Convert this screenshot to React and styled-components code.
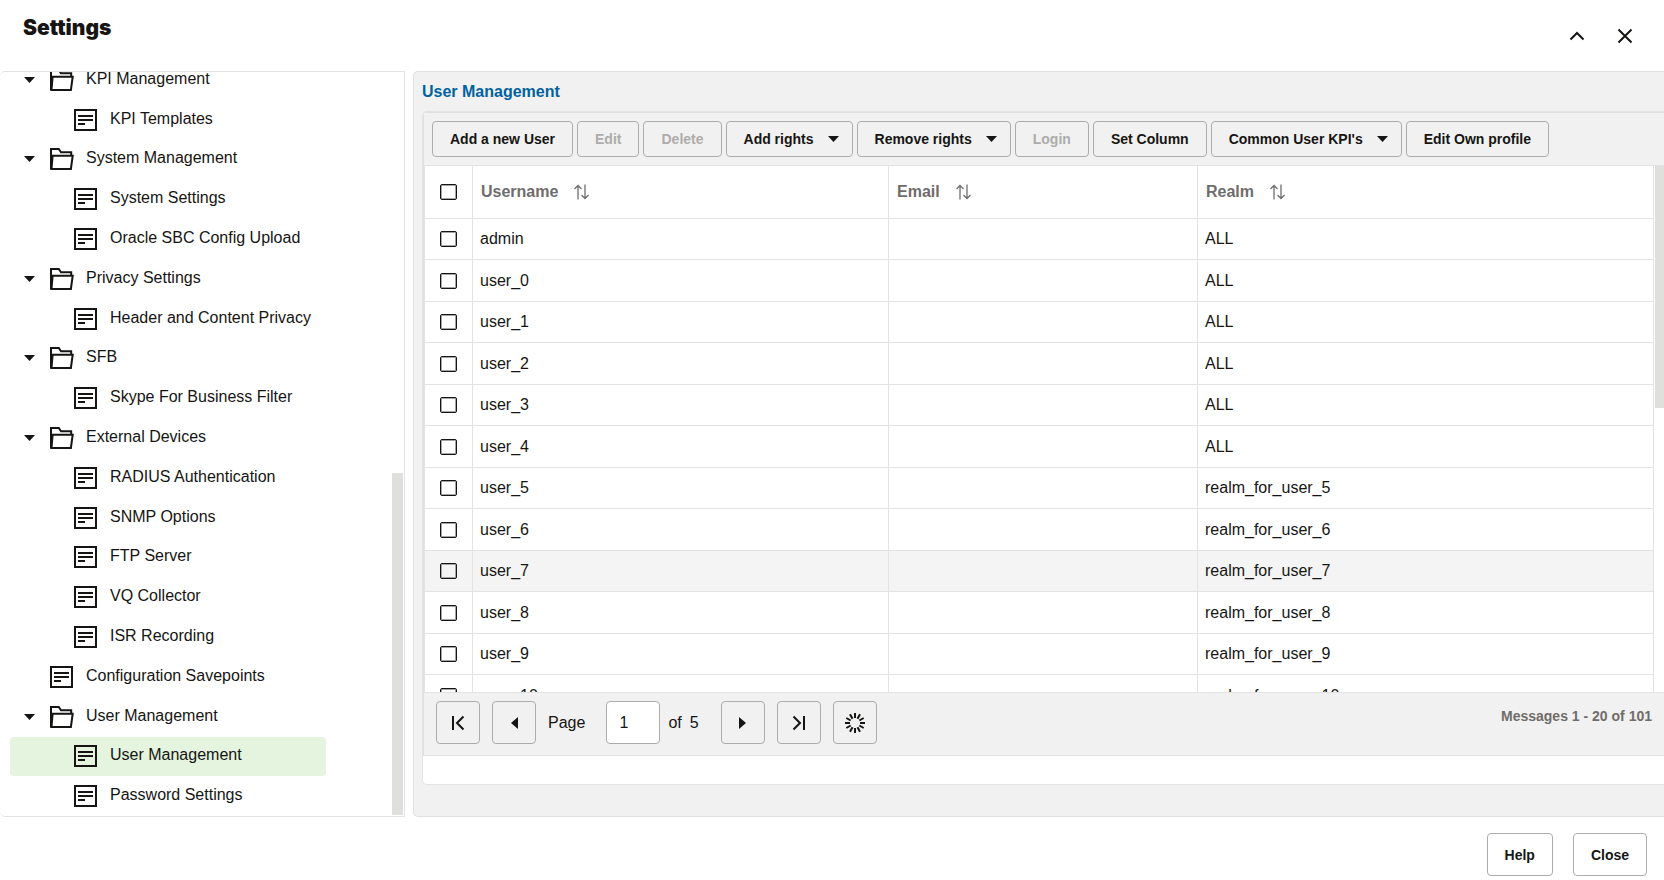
import React, { useState } from 'react'
import styled, { createGlobalStyle } from 'styled-components';

const GlobalStyles = createGlobalStyle`
    * {
        box-sizing: border-box;
    }
    body {
        margin: 0;
        background-color: white;
        color: #161513;
        font-family: "Liberation Sans", Arial, sans-serif;
        font-size: 16px;
        line-height: 20px;
    }
    button, input {
        font-family: inherit;
        color: inherit;
    }
`;

const Page = styled.div`
    display: flex;
    flex-direction: column;
    height: 100vh;
    overflow: hidden;
`;

const Header = styled.header`
    display: flex;
    justify-content: space-between;
    height: 71px;
    flex: none;
    padding: 16px 23px 0;
`;

const Title = styled.h1`
    margin: 0;
    font-family: Inter, "Liberation Sans", sans-serif;
    font-size: 21px;
    line-height: 24px;
    font-weight: 900;
`;

const HeaderActions = styled.div`
    display: flex;
    gap: 16px;
    height: 40px;
    align-items: center;
`;

const IconButton = styled.button`
    display: flex;
    align-items: center;
    justify-content: center;
    width: 32px;
    height: 32px;
    padding: 0;
    border: none;
    background: none;
    cursor: pointer;
`;

const Content = styled.main`
    display: flex;
    flex: 1;
    min-height: 0;
    gap: 8px;
`;

/* ---- tree ---- */

const Sidebar = styled.nav`
    display: flex;
    flex: none;
    width: 405px;
    overflow: hidden;
    border: 1px solid #e3e3e3;
    border-left: none;
    border-radius: 5px 0 0 5px;
`;

// the tree is scrolled down, so its first row is partly cut
const Tree = styled.ul`
    display: flex;
    flex-direction: column;
    flex: 1;
    margin: -12px 66px 0 10px;
    padding: 0;
    list-style: none;
`;

const TreeRow = styled.li`
    display: flex;
    flex: 1;
    min-height: 0;
    align-items: center;
    padding-left: ${p => (p.$open ? 12 : p.$child ? 64 : 40)}px;
    border-radius: 4px;
    background-color: ${p => (p.$selected ? '#e4f4de' : 'transparent')};
`;

const Toggle = styled.button`
    display: flex;
    align-items: center;
    width: 28px;
    height: 24px;
    padding: 0 0 0 2px;
    border: none;
    background: none;
    cursor: pointer;
`;

const TreeLink = styled.a`
    display: flex;
    align-items: center;
    gap: 12px;
    color: inherit;
    text-decoration: none;
    white-space: nowrap;
    svg {
        flex: none;
    }
    span {
        padding-bottom: 2px;
    }
`;

const ScrollTrack = styled.div`
    display: flex;
    flex-direction: column;
    justify-content: ${p => (p.$end ? 'flex-end' : 'flex-start')};
    flex: none;
    width: ${p => (p.$end ? 12 : 10)}px;
    padding: ${p => (p.$end ? '0 1px 1px 0' : '0 0 0 1px')};
`;

const ScrollThumb = styled.div`
    height: 46%;
    background-color: #dfdfdd;
`;

/* ---- right panel ---- */

const Panel = styled.section`
    display: flex;
    flex-direction: column;
    flex: 1;
    min-width: 0;
    padding: 0 0 31px 8px;
    background-color: #f1f1f1;
    border: 1px solid #e0e0e0;
    border-right: none;
    border-radius: 5px 0 0 5px;
`;

const PanelTitle = styled.h2`
    margin: 0;
    padding: 10px 0 9px;
    font-size: 16px;
    line-height: 20px;
    color: #00629f;
`;

const Grid = styled.div`
    display: flex;
    flex-direction: column;
    flex: 1;
    min-height: 0;
    overflow: hidden;
    background-color: white;
    border: 1px solid #e3e3e3;
    border-right: none;
    border-radius: 5px 0 0 5px;
`;

const GridInner = styled.div`
    display: flex;
    flex-direction: column;
    flex: 1;
    min-height: 0;
    margin-bottom: 28px;
    border: 1px solid #e0e0e0;
    border-right: none;
`;

const Toolbar = styled.div`
    display: flex;
    flex: none;
    gap: 4px;
    padding: 8px;
    background-color: #f1f1f1;
    border-bottom: 1px solid #e3e3e3;
`;

const Button = styled.button`
    display: flex;
    align-items: center;
    justify-content: center;
    gap: 14px;
    flex: none;
    height: ${p => (p.$tall ? 43 : 36)}px;
    padding: 0 ${p => (p.$menu ? 13 : 17)}px 0 17px;
    border: 1px solid #adacab;
    border-radius: 4px;
    background-color: transparent;
    font-size: 14px;
    font-weight: bold;
    white-space: nowrap;
    cursor: pointer;
    &:disabled {
        color: #adacab;
        cursor: default;
    }
`;

const GridBody = styled.div`
    display: flex;
    flex: 1;
    min-height: 0;
    overflow: hidden;
`;

const TableWrap = styled.div`
    flex: 1;
    min-width: 0;
    overflow: hidden;
`;

const Table = styled.table`
    width: 100%;
    table-layout: fixed;
    border-collapse: separate;
    border-spacing: 0;
    border-left: 1px solid #e3e3e3;
    th, td {
        padding: 0 7px;
        text-align: left;
        border-right: 1px solid #e3e3e3;
        border-bottom: 1px solid #e3e3e3;
    }
    th {
        height: 53px;
        padding-left: 8px;
        color: #6f6d6b;
    }
    th:first-child, td:first-child {
        padding: 0 15px;
    }
`;

const Row = styled.tr`
    height: 41px;
    background-color: ${p => (p.$hover ? '#f4f4f4' : 'white')};
    &:nth-child(even) {
        height: 42px;
    }
`;

const Col = styled.col`
    width: ${p => p.$w}px;
`;

const HeadCell = styled.div`
    display: flex;
    align-items: center;
    gap: 16px;
`;

const Checkbox = styled.input`
    appearance: none;
    display: block;
    width: 17px;
    height: 16px;
    margin: 0;
    border: 1px solid #161513;
    border-radius: 2px;
    background-color: transparent;
    box-shadow: inset 0 0 0 1px #a5a4a2;
    &:checked {
        background-color: #161513;
    }
`;

const Pager = styled.form`
    display: flex;
    flex: none;
    align-items: flex-start;
    gap: 12px;
    height: 63px;
    padding: 8px 12px;
    background-color: #f1f1f1;
    border-top: 1px solid #e3e3e3;
`;

const PagerButton = styled(Button)`
    width: 44px;
    height: 43px;
    padding: 0;
`;

const PageField = styled.label`
    display: flex;
    align-items: center;
    gap: 8px;
    height: 43px;
    margin-right: 10px;
`;

const PageInput = styled.input`
    width: 54px;
    height: 43px;
    margin-left: 13px;
    padding: 0 12px;
    border: 1px solid #adacab;
    border-radius: 4px;
    background-color: white;
    font-size: 16px;
`;

const Messages = styled.span`
    margin-left: auto;
    padding-top: 5px;
    font-size: 14px;
    font-weight: bold;
    color: #6f6d6b;
`;

const Footer = styled.footer`
    display: flex;
    flex: none;
    justify-content: flex-end;
    gap: 20px;
    padding: 16px 17px 4px;
`;

const FolderIcon = () => (
    <svg width="24" height="22" viewBox="0 0 24 22" fill="none" stroke="#161513" strokeWidth="2">
        <path d="M1 21.500V1h7.800l2.200 3.200h10.200v3.400" />
        <path d="M1.500 21 2.600 7.700h20.100L20.900 21z" />
    </svg>
)

const DocIcon = () => (
    <svg width="24" height="22" viewBox="0 0 24 22" fill="none" stroke="#161513" strokeWidth="2">
        <path d="M1 1h21v20H1z" />
        <path d="M4 7h15M4 11h15M4 15h7" />
    </svg>
)

const Caret = () => (
    <svg width="11" height="6" viewBox="0 0 11 6" fill="#161513">
        <path d="M0 0h11L5.5 6z" />
    </svg>
)

const SortIcon = () => (
    <svg width="15" height="16" viewBox="0 0 15 16" fill="none" stroke="#6f6d6b" strokeWidth="1.3">
        <path d="M4 15.500V1.500M.5 5 4 1.500 7.500 5M11 .5v14M7.500 11l3.500 3.500 3.500-3.500" />
    </svg>
)

const tree = [
    { name: 'KPI Management', open: true },
    { name: 'KPI Templates', child: true },
    { name: 'System Management', open: true },
    { name: 'System Settings', child: true },
    { name: 'Oracle SBC Config Upload', child: true },
    { name: 'Privacy Settings', open: true },
    { name: 'Header and Content Privacy', child: true },
    { name: 'SFB', open: true },
    { name: 'Skype For Business Filter', child: true },
    { name: 'External Devices', open: true },
    { name: 'RADIUS Authentication', child: true },
    { name: 'SNMP Options', child: true },
    { name: 'FTP Server', child: true },
    { name: 'VQ Collector', child: true },
    { name: 'ISR Recording', child: true },
    { name: 'Configuration Savepoints' },
    { name: 'User Management', open: true },
    { name: 'User Management', child: true, selected: true },
    { name: 'Password Settings', child: true },
]

const tools = [
    { name: 'Add a new User' },
    { name: 'Edit', disabled: true },
    { name: 'Delete', disabled: true },
    { name: 'Add rights', menu: true },
    { name: 'Remove rights', menu: true },
    { name: 'Login', disabled: true },
    { name: 'Set Column' },
    { name: "Common User KPI's", menu: true },
    { name: 'Edit Own profile' },
]

const users = [{ name: 'admin', realm: 'ALL' }]
for (let i = 0; i <= 10; i++) {
    users.push({ name: `user_${i}`, realm: i < 5 ? 'ALL' : `realm_for_user_${i}` })
}

const spokes = Array.from({ length: 12 }, (_, i) => i * 30)

export default function App() {
    const [page, setPage] = useState('1')

    return (
        <Page>
            <GlobalStyles />
            <Header>
                <Title>Settings</Title>
                <HeaderActions>
                    <IconButton aria-label="Collapse">
                        <svg width="16" height="16" viewBox="0 0 16 16" fill="none" stroke="#161513" strokeWidth="2">
                            <path d="M1.500 11.500 8 5l6.500 6.500" />
                        </svg>
                    </IconButton>
                    <IconButton aria-label="Close dialog">
                        <svg width="16" height="16" viewBox="0 0 16 16" fill="none" stroke="#161513" strokeWidth="2">
                            <path d="M1.500 1.500l13 13M14.500 1.500l-13 13" />
                        </svg>
                    </IconButton>
                </HeaderActions>
            </Header>

            <Content>
                <Sidebar>
                    <Tree>
                        {tree.map((item, i) => (
                            <TreeRow key={i} $child={item.child} $open={item.open} $selected={item.selected}>
                                {item.open && <Toggle aria-label={`Collapse ${item.name}`}><Caret /></Toggle>}
                                <TreeLink href="#">
                                    {item.open ? <FolderIcon /> : <DocIcon />}
                                    <span>{item.name}</span>
                                </TreeLink>
                            </TreeRow>
                        ))}
                    </Tree>
                    <ScrollTrack $end>
                        <ScrollThumb />
                    </ScrollTrack>
                </Sidebar>

                <Panel>
                    <PanelTitle>User Management</PanelTitle>
                    <Grid>
                        <GridInner>
                            <Toolbar>
                                {tools.map(t => (
                                    <Button key={t.name} disabled={t.disabled} $menu={t.menu}>
                                        {t.name}
                                        {t.menu && <Caret />}
                                    </Button>
                                ))}
                            </Toolbar>
                            <GridBody>
                                <TableWrap>
                                    <Table>
                                        <colgroup>
                                            <Col $w={48} />
                                            <Col $w={416} />
                                            <Col $w={309} />
                                            <col />
                                        </colgroup>
                                        <thead>
                                            <tr>
                                                <th><Checkbox type="checkbox" aria-label="Select all" /></th>
                                                {['Username', 'Email', 'Realm'].map(name => (
                                                    <th key={name}>
                                                        <HeadCell>{name}<SortIcon /></HeadCell>
                                                    </th>
                                                ))}
                                            </tr>
                                        </thead>
                                        <tbody>
                                            {users.map(u => (
                                                <Row key={u.name} $hover={u.name === 'user_7'}>
                                                    <td><Checkbox type="checkbox" aria-label={`Select ${u.name}`} /></td>
                                                    <td>{u.name}</td>
                                                    <td></td>
                                                    <td>{u.realm}</td>
                                                </Row>
                                            ))}
                                        </tbody>
                                    </Table>
                                </TableWrap>
                                <ScrollTrack>
                                    <ScrollThumb />
                                </ScrollTrack>
                            </GridBody>
                            <Pager onSubmit={e => e.preventDefault()}>
                                <PagerButton type="button" aria-label="First page">
                                    <svg width="14" height="16" viewBox="0 0 14 16" fill="none" stroke="#161513" strokeWidth="2">
                                        <path d="M2 1v14M12.500 1.500 6 8l6.500 6.500" />
                                    </svg>
                                </PagerButton>
                                <PagerButton type="button" aria-label="Previous page">
                                    <svg width="7" height="12" viewBox="0 0 7 12" fill="#161513">
                                        <path d="M7 0v12L0 6z" />
                                    </svg>
                                </PagerButton>
                                <PageField>
                                    Page
                                    <PageInput value={page} onChange={e => setPage(e.target.value)} />
                                    <span>of</span>
                                    <span>5</span>
                                </PageField>
                                <PagerButton type="button" aria-label="Next page">
                                    <svg width="7" height="12" viewBox="0 0 7 12" fill="#161513">
                                        <path d="M0 0v12l7-6z" />
                                    </svg>
                                </PagerButton>
                                <PagerButton type="button" aria-label="Last page">
                                    <svg width="14" height="16" viewBox="0 0 14 16" fill="none" stroke="#161513" strokeWidth="2">
                                        <path d="M12 1v14M1.500 1.500 8 8l-6.500 6.500" />
                                    </svg>
                                </PagerButton>
                                <PagerButton type="button" aria-label="Refresh">
                                    <svg width="20" height="20" viewBox="0 0 20 20" stroke="#161513" strokeWidth="2">
                                        {spokes.map(a => <path key={a} d="M10 0v5" transform={`rotate(${a} 10 10)`} />)}
                                    </svg>
                                </PagerButton>
                                <Messages>Messages 1 - 20 of 101</Messages>
                            </Pager>
                        </GridInner>
                    </Grid>
                </Panel>
            </Content>

            <Footer>
                <Button $tall>Help</Button>
                <Button $tall>Close</Button>
            </Footer>
        </Page>
    )
}
